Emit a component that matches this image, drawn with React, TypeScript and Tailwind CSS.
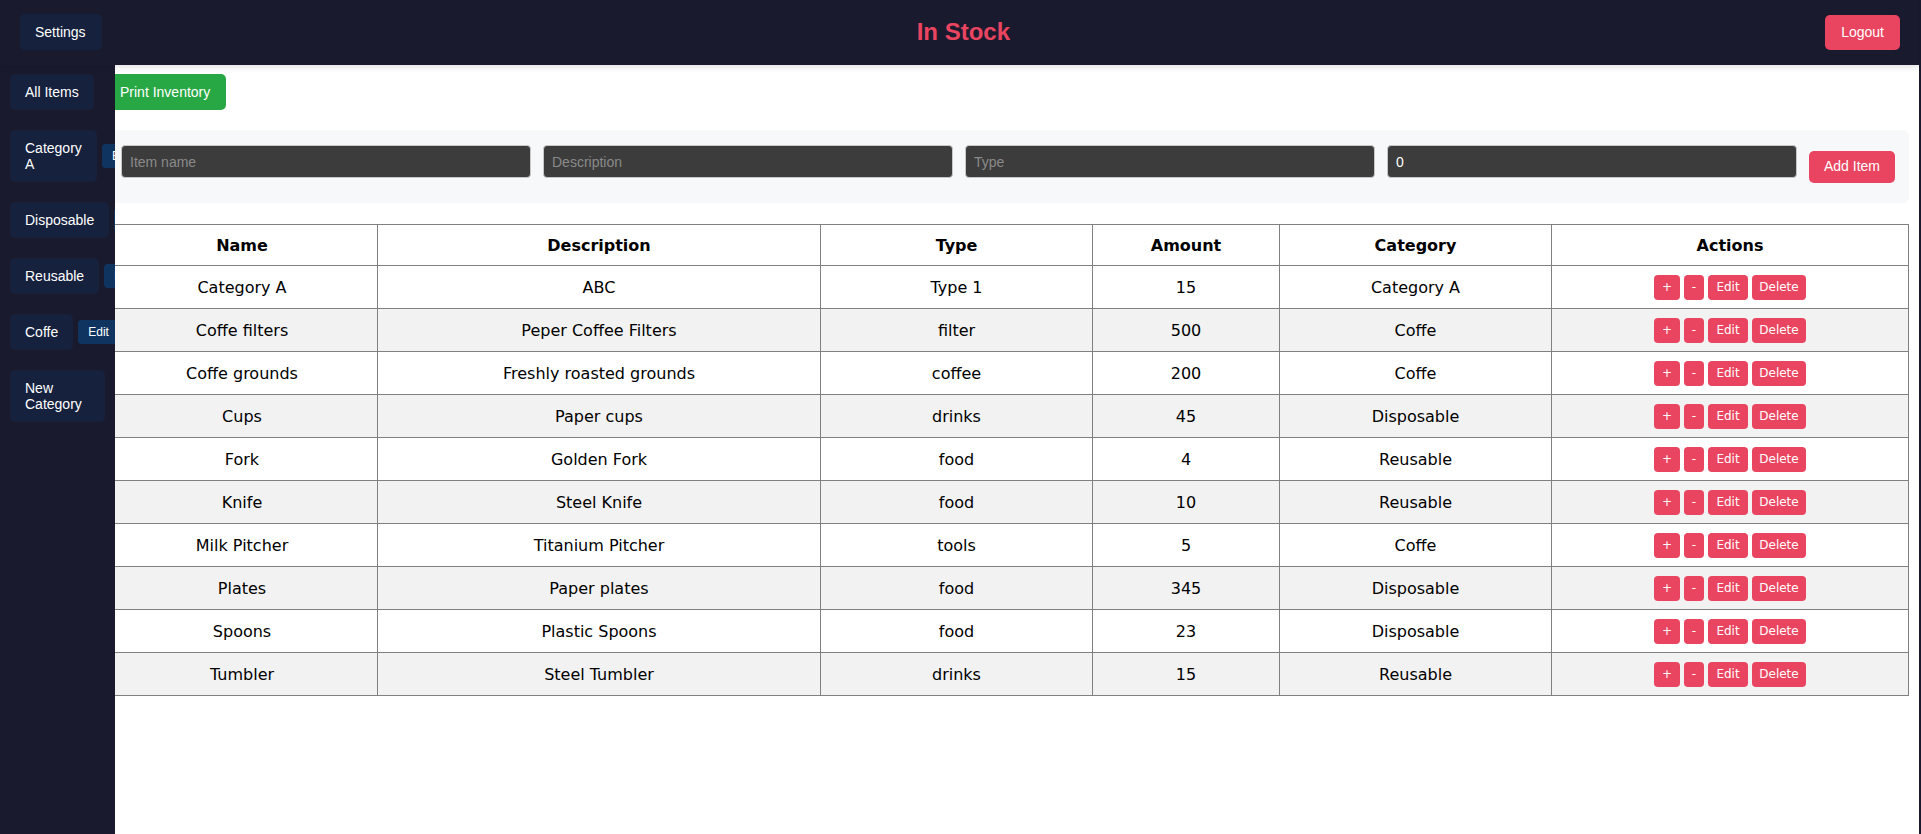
const items = [
  ["Category A", "ABC", "Type 1", "15", "Category A"],
  ["Coffe filters", "Peper Coffee Filters", "filter", "500", "Coffe"],
  ["Coffe grounds", "Freshly roasted grounds", "coffee", "200", "Coffe"],
  ["Cups", "Paper cups", "drinks", "45", "Disposable"],
  ["Fork", "Golden Fork", "food", "4", "Reusable"],
  ["Knife", "Steel Knife", "food", "10", "Reusable"],
  ["Milk Pitcher", "Titanium Pitcher", "tools", "5", "Coffe"],
  ["Plates", "Paper plates", "food", "345", "Disposable"],
  ["Spoons", "Plastic Spoons", "food", "23", "Disposable"],
  ["Tumbler", "Steel Tumbler", "drinks", "15", "Reusable"],
];

const categories = [
  { name: "All Items", edit: false, width: "" },
  { name: "Category A", edit: true, width: "w-[87px]" },
  { name: "Disposable", edit: true, width: "" },
  { name: "Reusable", edit: true, width: "" },
  { name: "Coffe", edit: true, width: "" },
  { name: "New Category", edit: false, width: "w-[95px]" },
];

const headers = ["Name", "Description", "Type", "Amount", "Category", "Actions"];

function ActionButton({ label, w }: { label: string; w: string }) {
  return (
    <button
      className={`h-[25px] ${w} rounded-[4px] bg-[#e94560] text-[12px] leading-none text-white`}
    >
      {label}
    </button>
  );
}

export default function App() {
  return (
    <div className="flex min-h-screen flex-col border-r-2 border-[#1a1a2e] bg-white font-['Liberation_Sans',Arial,sans-serif] text-[14px]">
      <header className="relative z-20 flex h-[65px] shrink-0 items-center justify-between bg-[#1a1a2e] pb-[1px] pl-[20px] pr-[19px] shadow-[0_2px_6px_rgba(0,0,0,0.12)]">
        <button className="h-[36px] rounded-[5px] bg-[#16213e] pl-[15px] pr-[16px] text-white">
          Settings
        </button>
        <h1 className="text-[24px] font-bold text-[#e94560]">In Stock</h1>
        <button className="h-[35px] rounded-[5px] bg-[#e94560] px-[16px] text-white">
          Logout
        </button>
      </header>

      <div className="flex flex-1">
        <aside className="relative z-10 flex w-[115px] shrink-0 flex-col gap-[20px] overflow-hidden bg-[#1a1a2e] pl-[10px] pt-[9px]">
          {categories.map((c) => (
            <div key={c.name} className="flex items-center gap-[5px]">
              <button
                className={`shrink-0 rounded-[5px] bg-[#16213e] py-[10px] pl-[15px] pr-[15px] text-left leading-[16px] text-white ${c.width}`}
              >
                {c.name}
              </button>
              {c.edit && (
                <button className="h-[24px] shrink-0 rounded-[4px] bg-[#0f3460] px-[10px] text-[12px] text-white">
                  Edit
                </button>
              )}
            </div>
          ))}
        </aside>

        <main className="-ml-[9px] flex-1 pr-[10px] pt-[9px]">
          <button className="-ml-[2px] h-[36px] rounded-[5px] bg-[#28a745] px-[16px] text-white">
            Print Inventory
          </button>

          <div className="mt-[20px] flex h-[73px] items-center gap-[12px] rounded-[6px] bg-[#f7f8fa] pl-[15px] pr-[14px]">
            {["Item name", "Description", "Type"].map((p) => (
              <input
                key={p}
                placeholder={p}
                className="mb-[10px] h-[33px] min-w-0 flex-1 rounded-[4px] border border-[#c8c8c8] bg-[#3c3c3c] px-[8px] text-white placeholder:text-[#8a8a8a]"
              />
            ))}
            <input
              defaultValue="0"
              className="mb-[10px] h-[33px] min-w-0 flex-1 rounded-[4px] border border-[#c8c8c8] bg-[#3c3c3c] px-[8px] text-white"
            />
            <button className="h-[32px] shrink-0 rounded-[5px] bg-[#e94560] px-[15px] text-white">
              Add Item
            </button>
          </div>

          <table className="mt-[21px] w-full table-fixed border-collapse font-['DejaVu_Sans',Verdana,sans-serif] text-[16px] text-black">
            <colgroup>
              <col className="w-[271px]" />
              <col className="w-[443px]" />
              <col className="w-[272px]" />
              <col className="w-[187px]" />
              <col className="w-[272px]" />
              <col />
            </colgroup>
            <thead>
              <tr>
                {headers.map((h) => (
                  <th key={h} className="h-[41px] border border-[#808080] p-0 pt-[1px] text-center font-bold">
                    {h}
                  </th>
                ))}
              </tr>
            </thead>
            <tbody>
              {items.map((row, i) => (
                <tr key={row[0]} className={i % 2 === 1 ? "bg-[#f2f2f2]" : "bg-white"}>
                  {row.map((cell, j) => (
                    <td key={j} className="h-[35px] border border-[#808080] p-0 pt-[2px] text-center">
                      {cell}
                    </td>
                  ))}
                  <td className="h-[43px] border border-[#808080] p-0">
                    <div className="flex justify-center gap-[4px]">
                      <ActionButton label="+" w="w-[26px]" />
                      <ActionButton label="-" w="w-[20px]" />
                      <ActionButton label="Edit" w="w-[40px]" />
                      <ActionButton label="Delete" w="w-[54px]" />
                    </div>
                  </td>
                </tr>
              ))}
            </tbody>
          </table>
        </main>
      </div>
    </div>
  );
}
